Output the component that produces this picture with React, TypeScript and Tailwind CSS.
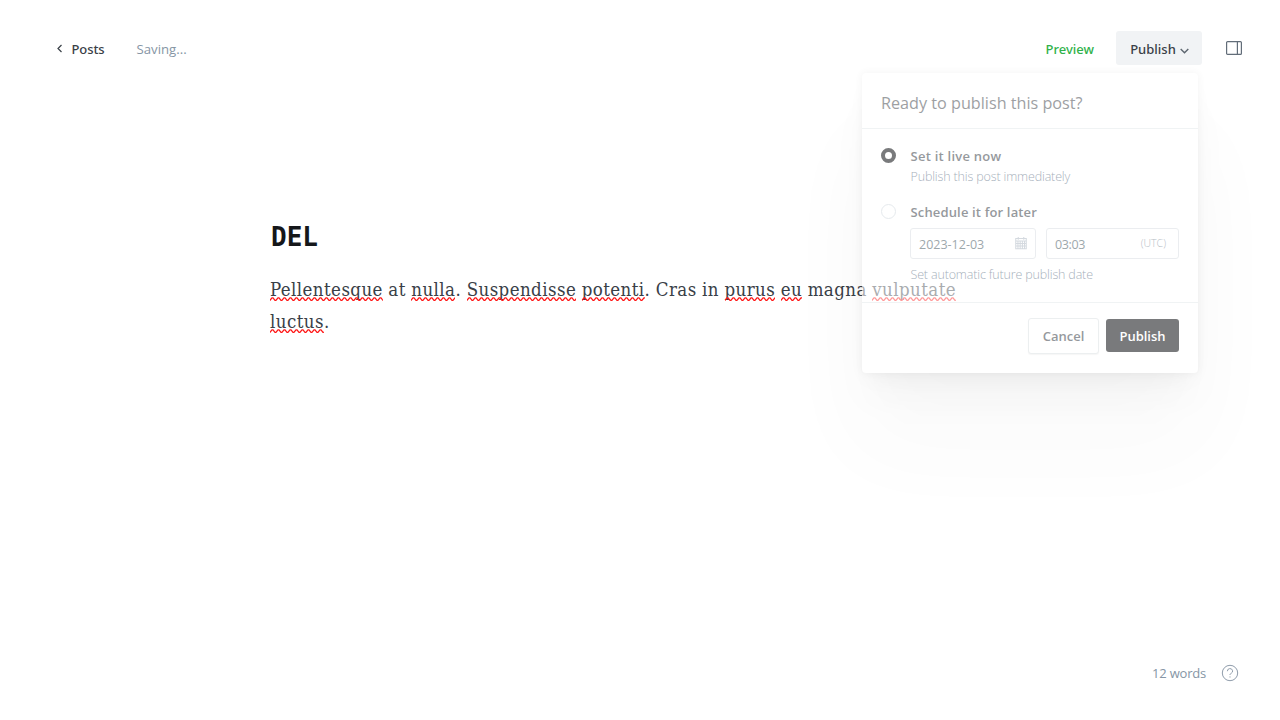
import type { ReactNode } from "react";

function Misspelled({ children, className = "" }: { children: string; className?: string }) {
  return (
    <span className={`relative inline-block whitespace-nowrap ${className}`}>
      {children}
      <svg className="absolute bottom-[5px] left-0 h-[4px] w-full" aria-hidden="true">
        <defs>
          <pattern id="squiggle" width="6" height="4" patternUnits="userSpaceOnUse">
            <path d="M-1 3.9 L0 3.3 L2 0.8 L3 0.8 L5 3.3 L6 3.3 L7 2" fill="none" stroke="#ff1515" strokeWidth="1.3" />
          </pattern>
        </defs>
        <rect width="100%" height="4" fill="url(#squiggle)" />
      </svg>
    </span>
  );
}

function Field({ className, children }: { className: string; children: ReactNode }) {
  return (
    <div className={`flex h-[31px] items-center rounded-[3px] border border-[#dde1e5] bg-white pt-[3px] pl-2 text-[12.5px] text-[#54666d] ${className}`}>
      {children}
    </div>
  );
}

function CalendarIcon() {
  return (
    <svg className="mt-[-4px] h-[14px] w-[12px]" viewBox="0 0 13 14" fill="none" stroke="#b4bec8" strokeWidth="1.1">
      <path d="M0.8 2.2h11.4v11H0.8zM0.8 4.8h11.4M3.5 0.5v3M9.5 0.5v3M3.2 5v8M5.6 5v8M8 5v8M10.3 5v8M1 7.5h11M1 10.2h11" />
    </svg>
  );
}

function PublishMenu() {
  return (
    <div className="absolute top-[73px] left-[862px] flex h-[300px] w-[336px] flex-col rounded-[4px] bg-white opacity-[0.57] shadow-[0_0_7px_rgba(0,0,0,0.08),0_10px_20px_-6px_rgba(0,0,0,0.06),0_30px_40px_-10px_rgba(0,0,0,0.06),0_70px_90px_rgba(0,0,0,0.035)]">
      <header className="flex h-[56px] items-center border-b border-[#e5eaed] px-[19px] pt-[6px] text-[16.2px] text-[#54585d]">
        <span>Ready to publish this post?</span>
      </header>
      <div className="flex h-[174px] flex-col border-b border-[#e5eaed] px-[19px]">
        <div className="flex gap-[14px] pt-[17px]">
          <span className="mt-[2px] size-[15px] rounded-full border-[4px] border-[#15171a] bg-white" />
          <div>
            <div className="h-[20px] pl-[0.5px] text-[13px] leading-[21px] font-semibold tracking-[0.25px] text-[#464c53]">Set it live now</div>
            <div className="pl-[0.5px] text-[12.5px] leading-[22px] font-light tracking-[-0.15px] text-[#5f7488]">Publish this post immediately</div>
          </div>
        </div>
        <div className="flex gap-[14px] pt-[14px]">
          <span className="mt-[2px] size-[15px] shrink-0 rounded-full border border-[#d3dbe1] bg-white" />
          <div>
            <div className="h-[26px] pl-[0.5px] text-[13px] leading-[20px] font-semibold tracking-[0.15px] text-[#464c53]">Schedule it for later</div>
            <div className="flex gap-[10px]">
              <Field className="w-[126px] justify-between pr-2">
                2023-12-03
                <CalendarIcon />
              </Field>
              <Field className="w-[133px] justify-between pr-3">
                <span className="tracking-[-0.4px]">03:03</span>
                <span className="mt-[-3px] text-[10.5px] font-light text-[#7d8b98]">(UTC)</span>
              </Field>
            </div>
            <div className="pt-[6px] pl-[0.5px] text-[12.5px] leading-[20px] font-light tracking-[-0.16px] text-[#5f7488]">Set automatic future publish date</div>
          </div>
        </div>
      </div>
      <footer className="flex justify-end gap-[7px] px-[19px] pt-[15px] text-[13px] font-semibold">
        <button className="h-[36px] w-[71px] rounded-[3px] border border-[#dfe3e6] bg-white pt-[2px] text-[#464c53] shadow-[0_1px_1px_rgba(0,0,0,0.06)]">Cancel</button>
        <button className="mt-[1px] h-[33px] w-[73px] rounded-[3px] bg-[#15171a] pt-[2px] text-white">Publish</button>
      </footer>
    </div>
  );
}

export default function App() {
  return (
    <div className="relative flex h-[720px] w-[1280px] flex-col overflow-hidden bg-white font-['Open_Sans',sans-serif]">
      <header className="flex h-[96px] items-center px-[38px] text-[13px]">
        <a className="ml-[18px] flex items-center font-['Noto_Sans',sans-serif] font-medium text-[#394047]">
          <svg className="mt-px mr-[9px] h-[9px] w-[7px]" viewBox="0 0 7 9" fill="none" stroke="#394047" strokeWidth="1.2">
            <path d="M5.5 1L2 4.5L5.5 8" />
          </svg>
          <span className="mt-[3px] ml-[-0.5px] w-[33.5px] tracking-[-0.1px]">Posts</span>
        </a>
        <span className="mt-[4px] ml-[31.5px] text-[13.2px] text-[#8696a5]">Saving...</span>
        <span className="mt-[3px] ml-auto font-['Noto_Sans',sans-serif] font-medium text-[#30b24a]">Preview</span>
        <button className="ml-[22px] flex h-[34px] w-[86px] items-center rounded-[3px] bg-[#f1f3f5] pl-[14px] font-['Noto_Sans',sans-serif] font-medium text-[#394047]">
          <span className="mt-[3px] w-[46px]">Publish</span>
          <svg className="mt-[5px] ml-[4px] h-[6px] w-[9px]" viewBox="0 0 9 6" fill="none" stroke="#5d666f" strokeWidth="1.4">
            <path d="M0.7 0.9L4.5 4.7L8.3 0.9" />
          </svg>
        </button>
        <svg className="mt-[-1px] ml-[24px] h-[14px] w-[16px]" viewBox="0 0 16 14" fill="none" stroke="#626d79" strokeWidth="1.2">
          <rect x="0.6" y="0.6" width="14.8" height="12.8" rx="1" />
          <path d="M11.4 0.6v12.8" />
        </svg>
      </header>
      <main className="ml-[270px] w-[740px] grow pt-[120px]">
        <h1 className="pl-[1px] font-['DejaVu_Sans_Mono',monospace] text-[26px] leading-[42px] font-bold text-[#15171a]">DEL</h1>
        <p className="mt-[16px] font-['DejaVu_Serif_Condensed','DejaVu_Serif',serif] text-[18.5px] leading-[32px] tracking-[0.43px] text-[#394047] [word-spacing:-0.24px]">
          <Misspelled>Pellentesque</Misspelled> at <Misspelled>nulla</Misspelled>. <Misspelled>Suspendisse</Misspelled>{" "}
          <Misspelled>potenti</Misspelled>. Cras in <Misspelled>purus</Misspelled> <Misspelled>eu</Misspelled> magna{" "}
          <Misspelled>vulputate</Misspelled>
          <br />
          <Misspelled>luctus</Misspelled>.
        </p>
      </main>
      <footer className="flex h-[60px] items-start justify-end gap-[15px] pt-[4px] pr-[41px] text-[13px] text-[#8696a5]">
        <span className="mt-[-1px] leading-[20px] tracking-[-0.2px]">12 words</span>
        <svg className="size-[18px]" viewBox="0 0 18 18" fill="none" stroke="#8f9cab" strokeWidth="1">
          <circle cx="9" cy="9" r="7.7" />
          <path d="M6.4 7.2a2.6 2.5 0 1 1 3.8 2.1c-.9.5-1.2.8-1.2 1.7M9 12.4v1.1" />
        </svg>
      </footer>
      <PublishMenu />
    </div>
  );
}
